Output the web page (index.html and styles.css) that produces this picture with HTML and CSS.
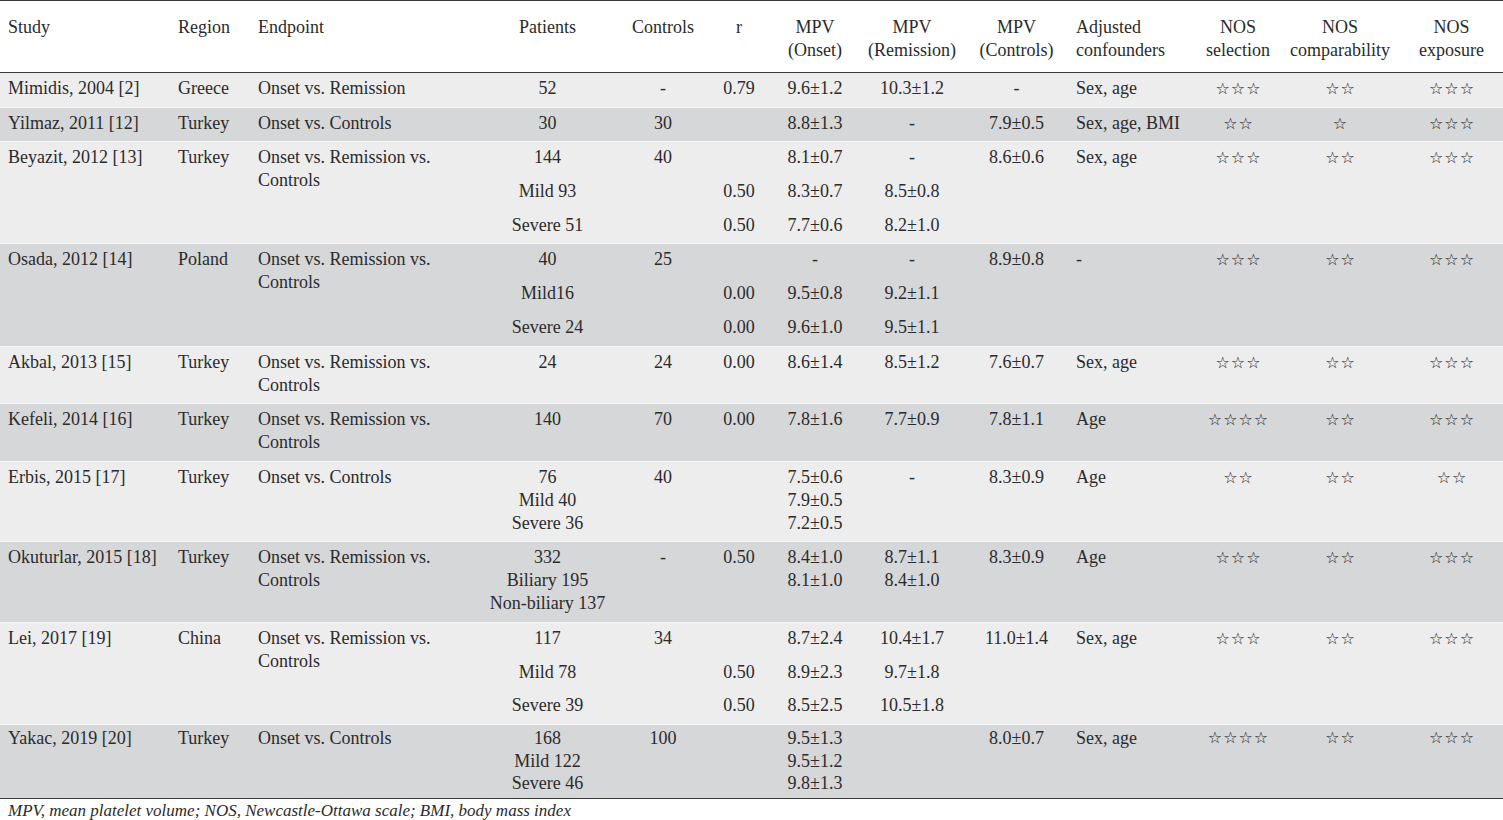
FILE: index.html
```html
<!DOCTYPE html>
<html>
<head>
<meta charset="utf-8">
<link rel="stylesheet" href="styles.css">
</head>
<body>
<table class="tbl">
<colgroup>
<col class="c-study"><col class="c-region"><col class="c-end"><col class="c-pat"><col class="c-ctl"><col class="c-r"><col class="c-on"><col class="c-rem"><col class="c-mc"><col class="c-adj"><col class="c-sel"><col class="c-comp"><col class="c-exp">
</colgroup>
<thead>
<tr>
<th class="l">Study</th><th class="l">Region</th><th class="l">Endpoint</th><th>Patients</th><th>Controls</th><th>r</th><th>MPV<br>(Onset)</th><th>MPV<br>(Remission)</th><th>MPV<br>(Controls)</th><th class="l adj">Adjusted<br>confounders</th><th>NOS<br>selection</th><th>NOS<br>comparability</th><th>NOS<br>exposure</th>
</tr>
</thead>
<tbody class="light">
<tr><td class="l">Mimidis, 2004 [2]</td><td class="l">Greece</td><td class="l">Onset vs. Remission</td><td>52</td><td>-</td><td>0.79</td><td>9.6±1.2</td><td>10.3±1.2</td><td>-</td><td class="l adj">Sex, age</td><td class="st">☆☆☆</td><td class="st">☆☆</td><td class="st">☆☆☆</td></tr>
</tbody>
<tbody class="dark">
<tr><td class="l">Yilmaz, 2011 [12]</td><td class="l">Turkey</td><td class="l">Onset vs. Controls</td><td>30</td><td>30</td><td></td><td>8.8±1.3</td><td>-</td><td>7.9±0.5</td><td class="l adj">Sex, age, BMI</td><td class="st">☆☆</td><td class="st">☆</td><td class="st">☆☆☆</td></tr>
</tbody>
<tbody class="light sub">
<tr><td class="l" rowspan="3">Beyazit, 2012 [13]</td><td class="l" rowspan="3">Turkey</td><td class="l" rowspan="3">Onset vs. Remission vs. Controls</td><td>144</td><td>40</td><td></td><td>8.1±0.7</td><td>-</td><td>8.6±0.6</td><td class="l adj">Sex, age</td><td class="st">☆☆☆</td><td class="st">☆☆</td><td class="st">☆☆☆</td></tr>
<tr><td>Mild 93</td><td></td><td>0.50</td><td>8.3±0.7</td><td>8.5±0.8</td><td></td><td class="adj"></td><td></td><td></td><td></td></tr>
<tr><td>Severe 51</td><td></td><td>0.50</td><td>7.7±0.6</td><td>8.2±1.0</td><td></td><td class="adj"></td><td></td><td></td><td></td></tr>
</tbody>
<tbody class="dark sub">
<tr><td class="l" rowspan="3">Osada, 2012 [14]</td><td class="l" rowspan="3">Poland</td><td class="l" rowspan="3">Onset vs. Remission vs. Controls</td><td>40</td><td>25</td><td></td><td>-</td><td>-</td><td>8.9±0.8</td><td class="l adj">-</td><td class="st">☆☆☆</td><td class="st">☆☆</td><td class="st">☆☆☆</td></tr>
<tr><td>Mild16</td><td></td><td>0.00</td><td>9.5±0.8</td><td>9.2±1.1</td><td></td><td class="adj"></td><td></td><td></td><td></td></tr>
<tr><td>Severe 24</td><td></td><td>0.00</td><td>9.6±1.0</td><td>9.5±1.1</td><td></td><td class="adj"></td><td></td><td></td><td></td></tr>
</tbody>
<tbody class="light">
<tr><td class="l">Akbal, 2013 [15]</td><td class="l">Turkey</td><td class="l">Onset vs. Remission vs. Controls</td><td>24</td><td>24</td><td>0.00</td><td>8.6±1.4</td><td>8.5±1.2</td><td>7.6±0.7</td><td class="l adj">Sex, age</td><td class="st">☆☆☆</td><td class="st">☆☆</td><td class="st">☆☆☆</td></tr>
</tbody>
<tbody class="dark">
<tr><td class="l">Kefeli, 2014 [16]</td><td class="l">Turkey</td><td class="l">Onset vs. Remission vs. Controls</td><td>140</td><td>70</td><td>0.00</td><td>7.8±1.6</td><td>7.7±0.9</td><td>7.8±1.1</td><td class="l adj">Age</td><td class="st">☆☆☆☆</td><td class="st">☆☆</td><td class="st">☆☆☆</td></tr>
</tbody>
<tbody class="light">
<tr><td class="l">Erbis, 2015 [17]</td><td class="l">Turkey</td><td class="l">Onset vs. Controls</td><td>76<br>Mild 40<br>Severe 36</td><td>40</td><td></td><td>7.5±0.6<br>7.9±0.5<br>7.2±0.5</td><td>-</td><td>8.3±0.9</td><td class="l adj">Age</td><td class="st">☆☆</td><td class="st">☆☆</td><td class="st">☆☆</td></tr>
</tbody>
<tbody class="dark">
<tr><td class="l">Okuturlar, 2015 [18]</td><td class="l">Turkey</td><td class="l">Onset vs. Remission vs. Controls</td><td>332<br>Biliary 195<br>Non-biliary 137</td><td>-</td><td>0.50</td><td>8.4±1.0<br>8.1±1.0</td><td>8.7±1.1<br>8.4±1.0</td><td>8.3±0.9</td><td class="l adj">Age</td><td class="st">☆☆☆</td><td class="st">☆☆</td><td class="st">☆☆☆</td></tr>
</tbody>
<tbody class="light sub">
<tr><td class="l" rowspan="3">Lei, 2017 [19]</td><td class="l" rowspan="3">China</td><td class="l" rowspan="3">Onset vs. Remission vs. Controls</td><td>117</td><td>34</td><td></td><td>8.7±2.4</td><td>10.4±1.7</td><td>11.0±1.4</td><td class="l adj">Sex, age</td><td class="st">☆☆☆</td><td class="st">☆☆</td><td class="st">☆☆☆</td></tr>
<tr><td>Mild 78</td><td></td><td>0.50</td><td>8.9±2.3</td><td>9.7±1.8</td><td></td><td class="adj"></td><td></td><td></td><td></td></tr>
<tr><td>Severe 39</td><td></td><td>0.50</td><td>8.5±2.5</td><td>10.5±1.8</td><td></td><td class="adj"></td><td></td><td></td><td></td></tr>
</tbody>
<tbody class="dark last">
<tr><td class="l">Yakac, 2019 [20]</td><td class="l">Turkey</td><td class="l">Onset vs. Controls</td><td>168<br>Mild 122<br>Severe 46</td><td>100</td><td></td><td>9.5±1.3<br>9.5±1.2<br>9.8±1.3</td><td></td><td>8.0±0.7</td><td class="l adj">Sex, age</td><td class="st">☆☆☆☆</td><td class="st">☆☆</td><td class="st">☆☆☆</td></tr>
</tbody>
</table>
<p class="note">MPV, mean platelet volume; NOS, Newcastle-Ottawa scale; BMI, body mass index</p>
</body>
</html>
```
FILE: styles.css
```css
html, body {
  margin: 0;
  padding: 0;
  background: #ffffff;
}
body {
  font-family: "Liberation Serif", "Times New Roman", serif;
  font-size: 18px;
  color: #2b2b2b;
}
.tbl {
  width: 1503px;
  border-collapse: collapse;
  table-layout: fixed;
  border-top: 1px solid #3a3a3a;
  border-bottom: 1px solid #3a3a3a;
}
.c-study { width: 170px; }
.c-region { width: 80px; }
.c-end { width: 220px; }
.c-pat { width: 155px; }
.c-ctl { width: 76px; }
.c-r { width: 76px; }
.c-on { width: 76px; }
.c-rem { width: 118px; }
.c-mc { width: 91px; }
.c-adj { width: 134px; }
.c-sel { width: 84px; }
.c-comp { width: 120px; }
.c-exp { width: 103px; }
th, td {
  text-align: center;
  vertical-align: top;
  line-height: 23px;
  padding: 4px 6px 6.5px;
  font-weight: normal;
  white-space: nowrap;
}
tbody.sub td { padding-bottom: 6.8px; }
tbody.last td { line-height: 22.5px; padding-top: 2px; padding-bottom: 3px; }
td.l, th.l { text-align: left; white-space: normal; padding-left: 8px; }
td.adj, th.adj { padding-left: 14px; }
thead th {
  padding-top: 15px;
  padding-bottom: 10px;
  border-bottom: 1px solid #3a3a3a;
  background: #ffffff;
}
tbody.light td { background: #ededee; }
tbody.dark td { background: #d6d7d9; }
tbody + tbody { border-top: 1px solid #f7f7f7; }
td.st {
  font-family: "DejaVu Sans", sans-serif;
  font-size: 16px;
  letter-spacing: 1px;
  text-indent: 1px;
  color: #1e1e1e;
}
.note {
  margin: 3px 0 0 8px;
  font-style: italic;
  font-size: 17px;
  line-height: 18px;
}
```
